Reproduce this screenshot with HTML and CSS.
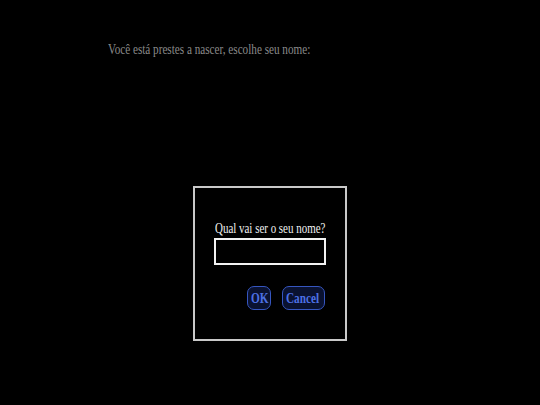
FILE: index.html
```html
<!DOCTYPE html>
<html lang="pt">
<head>
<meta charset="utf-8">
<link rel="stylesheet" href="styles.css">
</head>
<body>
<p class="intro"><span class="cond cond-intro">Você está prestes a nascer, escolhe seu nome:</span></p>
<div class="dialog">
  <label class="prompt"><span class="cond cond-prompt">Qual vai ser o seu nome?</span></label>
  <div class="field"></div>
  <div class="actions">
    <button class="btn btn-ok"><span class="cond">OK</span></button>
    <button class="btn btn-cancel"><span class="cond">Cancel</span></button>
  </div>
</div>
</body>
</html>
```
FILE: styles.css
```css
html, body {
  margin: 0;
  padding: 0;
  background: #000;
  width: 540px;
  height: 405px;
  overflow: hidden;
  font-family: "Liberation Serif", "Times New Roman", serif;
}
.cond {
  display: inline-block;
  transform: scaleX(0.75);
  transform-origin: left center;
  white-space: nowrap;
}
.cond-intro { transform: scaleX(0.745); }
.cond-prompt { transform: scaleX(0.73); }
.intro {
  margin: 0;
  padding: 40px 0 0 108px;
  height: 186px;
  box-sizing: border-box;
  color: #8a8a8a;
  font-size: 15px;
  line-height: 18px;
}
.dialog {
  width: 150px;
  height: 151px;
  margin: 0 auto;
  border: 2px solid #c9c9c9;
  display: flex;
  flex-direction: column;
}
.prompt {
  display: block;
  color: #f0f0f0;
  font-size: 15px;
  line-height: 18px;
  margin: 31px 0 0 20px;
}
.field {
  width: 108px;
  height: 23px;
  border: 2px solid #f2f2f2;
  margin: 1px 0 0 19px;
}
.actions {
  display: flex;
  justify-content: flex-end;
  gap: 11px;
  margin: 21px 20px 0 0;
}
.btn {
  height: 24px;
  padding: 0;
  border: 1.5px solid #3656c0;
  border-radius: 7px;
  background: #0a1230;
  color: #4d70e4;
  font-family: "Liberation Serif", "Times New Roman", serif;
  font-weight: bold;
  font-size: 15px;
  line-height: 20px;
  text-align: left;
  overflow: hidden;
}
.btn-ok { width: 24px; padding-left: 3px; }
.btn-cancel { width: 43px; padding-left: 3px; }
```
